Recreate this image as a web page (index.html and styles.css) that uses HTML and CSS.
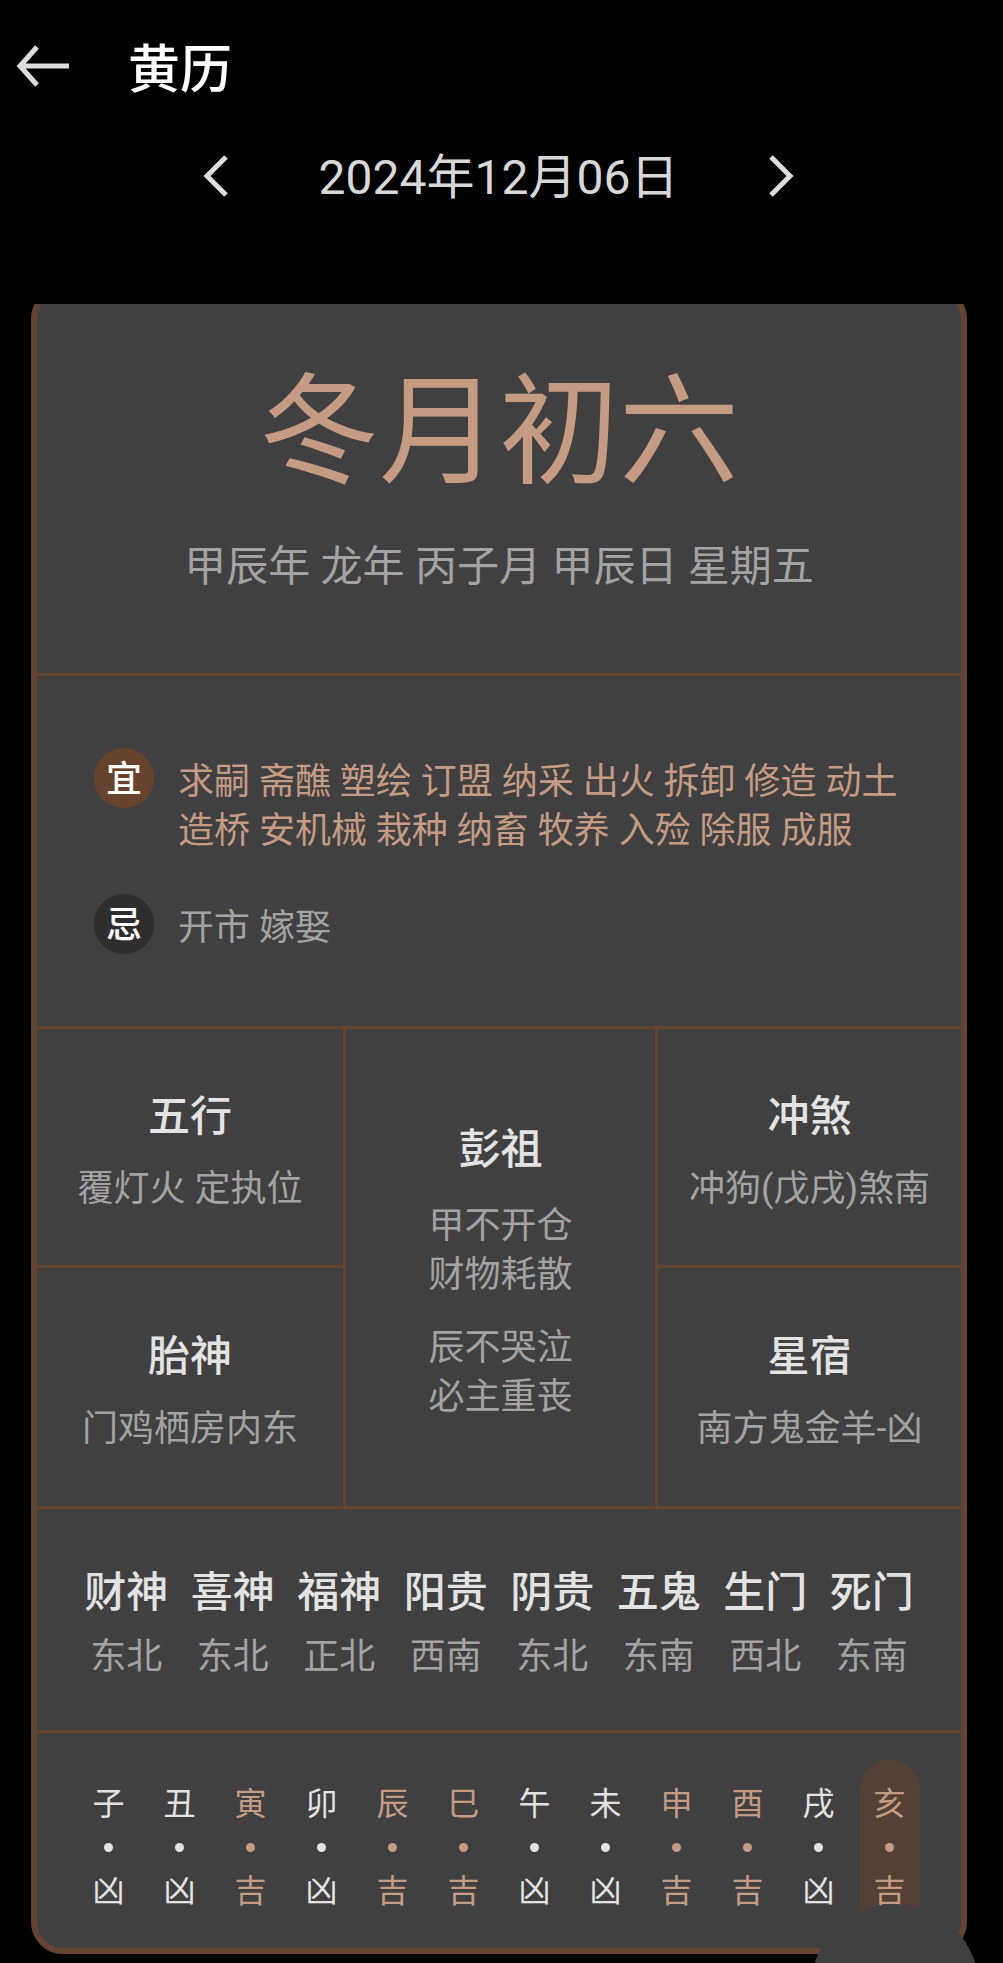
FILE: index.html
```html
<!DOCTYPE html>
<html lang="zh-CN">
<head>
    <meta charset="UTF-8">
    <meta name="viewport" content="width=device-width, initial-scale=1.0">
    <title>黄历</title>
    <link rel="stylesheet" href="styles.css">
</head>
<body>
    <header>
        <div class="title-bar">
            <button class="icon-button" aria-label="返回">
                <svg width="54" height="42" viewBox="0 0 54 42"><path d="M21 2 L4 21 L21 40 M4 21 H53"/></svg>
            </button>
            <h1>黄历</h1>
        </div>
        <div class="date-bar">
            <button class="icon-button" aria-label="前一天">
                <svg width="26" height="42" viewBox="0 0 26 42"><path d="M23 2 L4 21 L23 40"/></svg>
            </button>
            <time datetime="2024-12-06">2024年12月06日</time>
            <button class="icon-button" aria-label="后一天">
                <svg width="26" height="42" viewBox="0 0 26 42"><path d="M3 2 L22 21 L3 40"/></svg>
            </button>
        </div>
    </header>
    <main>
        <article class="card">
            <section class="lunar">
                <h2>冬月初六</h2>
                <p>甲辰年 龙年 丙子月 甲辰日 星期五</p>
            </section>
            <section class="advice">
                <div class="advice-row good">
                    <span class="badge">宜</span>
                    <p>求嗣 斋醮 塑绘 订盟 纳采 出火 拆卸 修造 动土 造桥 安机械 栽种 纳畜 牧养 入殓 除服 成服</p>
                </div>
                <div class="advice-row bad">
                    <span class="badge">忌</span>
                    <p>开市 嫁娶</p>
                </div>
            </section>
            <section class="details">
                <div class="cell">
                    <h3>五行</h3>
                    <p>覆灯火 定执位</p>
                </div>
                <div class="cell middle">
                    <h3>彭祖</h3>
                    <p>甲不开仓<br>财物耗散</p>
                    <p>辰不哭泣<br>必主重丧</p>
                </div>
                <div class="cell">
                    <h3>冲煞</h3>
                    <p>冲狗(戊戌)煞南</p>
                </div>
                <div class="cell lower">
                    <h3>胎神</h3>
                    <p>门鸡栖房内东</p>
                </div>
                <div class="cell lower">
                    <h3>星宿</h3>
                    <p>南方鬼金羊-凶</p>
                </div>
            </section>
            <section class="gods">
                <table>
                    <tr><th>财神</th><th>喜神</th><th>福神</th><th>阳贵</th><th>阴贵</th><th>五鬼</th><th>生门</th><th>死门</th></tr>
                    <tr><td>东北</td><td>东北</td><td>正北</td><td>西南</td><td>东北</td><td>东南</td><td>西北</td><td>东南</td></tr>
                </table>
            </section>
            <ul class="hours">
                <li><span>子</span><i></i><span>凶</span></li>
                <li><span>丑</span><i></i><span>凶</span></li>
                <li class="lucky"><span>寅</span><i></i><span>吉</span></li>
                <li><span>卯</span><i></i><span>凶</span></li>
                <li class="lucky"><span>辰</span><i></i><span>吉</span></li>
                <li class="lucky"><span>巳</span><i></i><span>吉</span></li>
                <li><span>午</span><i></i><span>凶</span></li>
                <li><span>未</span><i></i><span>凶</span></li>
                <li class="lucky"><span>申</span><i></i><span>吉</span></li>
                <li class="lucky"><span>酉</span><i></i><span>吉</span></li>
                <li><span>戌</span><i></i><span>凶</span></li>
                <li class="lucky current"><span>亥</span><i></i><span>吉</span></li>
            </ul>
        </article>
    </main>
    <button class="float-button" aria-label="更多"></button>
</body>
</html>
```
FILE: styles.css
```css
* {
    box-sizing: border-box;
    margin: 0;
    padding: 0;
}
:root {
    --line: #654331;
    --panel: #404040;
    --accent: #c59b84;
    --bright: #e3e3e3;
    --muted: #a3a3a3;
}
body {
    min-height: 100vh;
    background: #000;
    color: var(--muted);
    font-family: Roboto, "Noto Sans CJK SC", sans-serif;
    font-size: 36px;
    line-height: 49px;
}
h1, h2, h3, th {
    font-weight: 500;
}
button {
    border: none;
    background: none;
    cursor: pointer;
}
.icon-button {
    display: flex;
}
.icon-button svg {
    fill: none;
    stroke: #dedede;
    stroke-width: 5;
}
header {
    height: 304px;
    padding-top: 29px;
}
.title-bar {
    display: flex;
    align-items: center;
    gap: 58px;
    padding-left: 16px;
}
h1 {
    padding-top: 10px;
    color: #fff;
    font-size: 52px;
    line-height: 64px;
}
.date-bar {
    display: flex;
    justify-content: center;
    align-items: center;
    gap: 90px;
    margin-top: 39px;
    padding-right: 6px;
    color: #d8d8d8;
    font-size: 48px;
    line-height: 64px;
}
time {
    padding-top: 4px;
}
main {
    overflow: hidden;
    padding: 0 36px 8px 31px;
}
.card {
    margin-top: -17px;
    border: 6px solid var(--line);
    border-radius: 32px;
    background: var(--panel);
}
.lunar {
    padding: 64px 0 78px;
    text-align: center;
}
.lunar h2 {
    color: var(--accent);
    font-size: 120px;
    font-weight: 400;
    line-height: 152px;
}
.lunar p {
    margin-top: 30px;
    font-size: 42px;
    line-height: 56px;
}
.advice {
    display: grid;
    gap: 38px;
    padding: 72px 57px;
    border-top: 3px solid var(--line);
}
.advice-row {
    display: flex;
    gap: 24px;
}
.advice-row p {
    padding-top: 10px;
}
.good p {
    color: var(--accent);
}
.badge {
    flex: none;
    width: 60px;
    height: 60px;
    padding-top: 2px;
    border-radius: 50%;
    background: #2e2e2e;
    color: #fff;
    font-weight: 500;
    line-height: 60px;
    text-align: center;
}
.good .badge {
    background: #67432e;
}
.details {
    display: grid;
    grid-template-columns: 306fr 315fr 303fr;
    grid-template-rows: 236px 241px;
    border-top: 3px solid var(--line);
}
.cell {
    display: flex;
    flex-direction: column;
    justify-content: center;
    align-items: center;
    gap: 20px;
    padding-top: 8px;
    white-space: nowrap;
}
.middle {
    grid-row: span 2;
    gap: 24px;
    border: solid var(--line);
    border-width: 0 3px;
}
.lower {
    border-top: 3px solid var(--line);
}
h3, th {
    color: var(--bright);
    font-size: 42px;
    line-height: 56px;
}
.gods {
    padding: 56px 36px 48px;
    border-top: 3px solid var(--line);
}
table {
    width: 100%;
    table-layout: fixed;
    border-collapse: collapse;
    text-align: center;
}
td {
    padding-top: 12px;
}
.hours {
    display: grid;
    grid-template-columns: repeat(12, 1fr);
    justify-items: center;
    padding: 27px 36px 13px;
    border-top: 3px solid var(--line);
    list-style: none;
    color: var(--bright);
    font-size: 32px;
    line-height: 40px;
}
.hours li {
    display: flex;
    flex-direction: column;
    align-items: center;
    gap: 19px;
    width: 60px;
    padding: 24px 0;
    border-radius: 30px;
}
.hours i {
    width: 9px;
    height: 9px;
    border-radius: 50%;
    background: currentColor;
}
.hours .lucky {
    color: var(--accent);
}
.hours .current {
    background: #544135;
}
.float-button {
    position: fixed;
    right: 24px;
    bottom: -109px;
    width: 168px;
    height: 168px;
    border-radius: 50%;
    background: var(--panel);
}
```
